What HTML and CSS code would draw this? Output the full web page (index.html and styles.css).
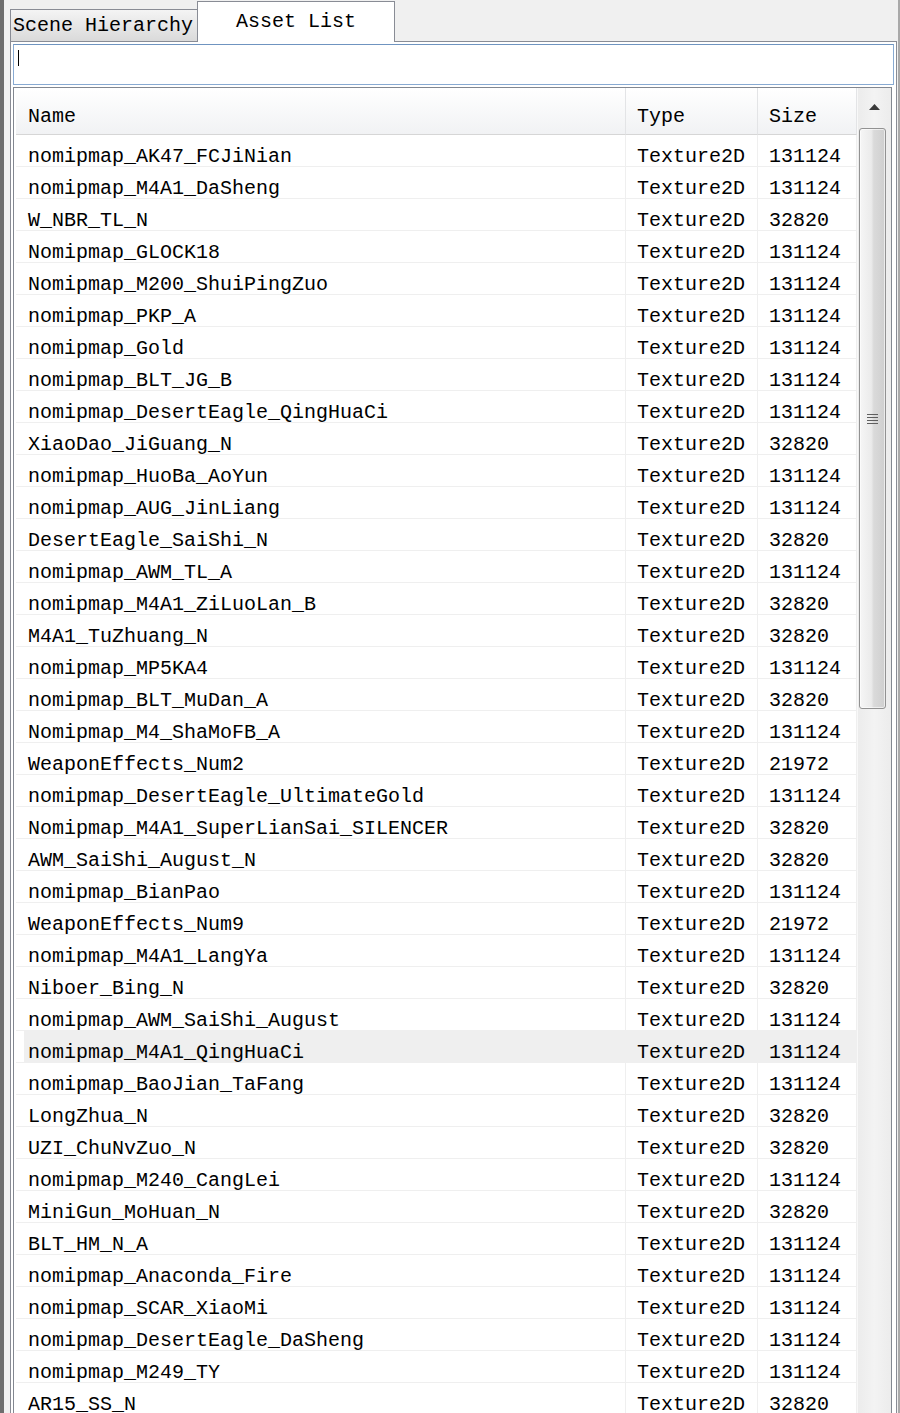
FILE: index.html
```
<!DOCTYPE html>
<html>
  <head>
    <meta charset="utf-8" />
    <title>Asset List</title>
    <meta name="viewport" content="width=device-width, initial-scale=1" />
    <link rel="stylesheet" href="styles.css">
  </head>

  <body>
    <div class="window">
      <div class="tabs">
        <div class="tab tab-off">Scene Hierarchy</div>
        <div class="tab tab-on">Asset List</div>
      </div>

      <div class="page">
        <div class="search"><span class="caret"></span></div>

        <div class="list">
          <div class="grid">
            <div class="row head">
              <div class="cell name">Name</div>
              <div class="cell">Type</div>
              <div class="cell">Size</div>
            </div>
            <div class="row"><div class="cell name">nomipmap_AK47_FCJiNian</div><div class="cell">Texture2D</div><div class="cell">131124</div></div>
            <div class="row"><div class="cell name">nomipmap_M4A1_DaSheng</div><div class="cell">Texture2D</div><div class="cell">131124</div></div>
            <div class="row"><div class="cell name">W_NBR_TL_N</div><div class="cell">Texture2D</div><div class="cell">32820</div></div>
            <div class="row"><div class="cell name">Nomipmap_GLOCK18</div><div class="cell">Texture2D</div><div class="cell">131124</div></div>
            <div class="row"><div class="cell name">Nomipmap_M200_ShuiPingZuo</div><div class="cell">Texture2D</div><div class="cell">131124</div></div>
            <div class="row"><div class="cell name">nomipmap_PKP_A</div><div class="cell">Texture2D</div><div class="cell">131124</div></div>
            <div class="row"><div class="cell name">nomipmap_Gold</div><div class="cell">Texture2D</div><div class="cell">131124</div></div>
            <div class="row"><div class="cell name">nomipmap_BLT_JG_B</div><div class="cell">Texture2D</div><div class="cell">131124</div></div>
            <div class="row"><div class="cell name">nomipmap_DesertEagle_QingHuaCi</div><div class="cell">Texture2D</div><div class="cell">131124</div></div>
            <div class="row"><div class="cell name">XiaoDao_JiGuang_N</div><div class="cell">Texture2D</div><div class="cell">32820</div></div>
            <div class="row"><div class="cell name">nomipmap_HuoBa_AoYun</div><div class="cell">Texture2D</div><div class="cell">131124</div></div>
            <div class="row"><div class="cell name">nomipmap_AUG_JinLiang</div><div class="cell">Texture2D</div><div class="cell">131124</div></div>
            <div class="row"><div class="cell name">DesertEagle_SaiShi_N</div><div class="cell">Texture2D</div><div class="cell">32820</div></div>
            <div class="row"><div class="cell name">nomipmap_AWM_TL_A</div><div class="cell">Texture2D</div><div class="cell">131124</div></div>
            <div class="row"><div class="cell name">nomipmap_M4A1_ZiLuoLan_B</div><div class="cell">Texture2D</div><div class="cell">32820</div></div>
            <div class="row"><div class="cell name">M4A1_TuZhuang_N</div><div class="cell">Texture2D</div><div class="cell">32820</div></div>
            <div class="row"><div class="cell name">nomipmap_MP5KA4</div><div class="cell">Texture2D</div><div class="cell">131124</div></div>
            <div class="row"><div class="cell name">nomipmap_BLT_MuDan_A</div><div class="cell">Texture2D</div><div class="cell">32820</div></div>
            <div class="row"><div class="cell name">Nomipmap_M4_ShaMoFB_A</div><div class="cell">Texture2D</div><div class="cell">131124</div></div>
            <div class="row"><div class="cell name">WeaponEffects_Num2</div><div class="cell">Texture2D</div><div class="cell">21972</div></div>
            <div class="row"><div class="cell name">nomipmap_DesertEagle_UltimateGold</div><div class="cell">Texture2D</div><div class="cell">131124</div></div>
            <div class="row"><div class="cell name">Nomipmap_M4A1_SuperLianSai_SILENCER</div><div class="cell">Texture2D</div><div class="cell">32820</div></div>
            <div class="row"><div class="cell name">AWM_SaiShi_August_N</div><div class="cell">Texture2D</div><div class="cell">32820</div></div>
            <div class="row"><div class="cell name">nomipmap_BianPao</div><div class="cell">Texture2D</div><div class="cell">131124</div></div>
            <div class="row"><div class="cell name">WeaponEffects_Num9</div><div class="cell">Texture2D</div><div class="cell">21972</div></div>
            <div class="row"><div class="cell name">nomipmap_M4A1_LangYa</div><div class="cell">Texture2D</div><div class="cell">131124</div></div>
            <div class="row"><div class="cell name">Niboer_Bing_N</div><div class="cell">Texture2D</div><div class="cell">32820</div></div>
            <div class="row"><div class="cell name">nomipmap_AWM_SaiShi_August</div><div class="cell">Texture2D</div><div class="cell">131124</div></div>
            <div class="row hot"><div class="cell name">nomipmap_M4A1_QingHuaCi</div><div class="cell">Texture2D</div><div class="cell">131124</div></div>
            <div class="row"><div class="cell name">nomipmap_BaoJian_TaFang</div><div class="cell">Texture2D</div><div class="cell">131124</div></div>
            <div class="row"><div class="cell name">LongZhua_N</div><div class="cell">Texture2D</div><div class="cell">32820</div></div>
            <div class="row"><div class="cell name">UZI_ChuNvZuo_N</div><div class="cell">Texture2D</div><div class="cell">32820</div></div>
            <div class="row"><div class="cell name">nomipmap_M240_CangLei</div><div class="cell">Texture2D</div><div class="cell">131124</div></div>
            <div class="row"><div class="cell name">MiniGun_MoHuan_N</div><div class="cell">Texture2D</div><div class="cell">32820</div></div>
            <div class="row"><div class="cell name">BLT_HM_N_A</div><div class="cell">Texture2D</div><div class="cell">131124</div></div>
            <div class="row"><div class="cell name">nomipmap_Anaconda_Fire</div><div class="cell">Texture2D</div><div class="cell">131124</div></div>
            <div class="row"><div class="cell name">nomipmap_SCAR_XiaoMi</div><div class="cell">Texture2D</div><div class="cell">131124</div></div>
            <div class="row"><div class="cell name">nomipmap_DesertEagle_DaSheng</div><div class="cell">Texture2D</div><div class="cell">131124</div></div>
            <div class="row"><div class="cell name">nomipmap_M249_TY</div><div class="cell">Texture2D</div><div class="cell">131124</div></div>
            <div class="row"><div class="cell name">AR15_SS_N</div><div class="cell">Texture2D</div><div class="cell">32820</div></div>
          </div>

          <div class="vscroll">
            <div class="arrow-up">
              <svg width="11" height="6" viewBox="0 0 11 6"><polygon points="0,6 5.5,0 11,6" fill="#3a3a3a"/></svg>
            </div>
            <div class="thumb">
              <svg width="11" height="10" viewBox="0 0 11 10">
                <rect x="0" y="0" width="11" height="1" fill="#5f5f5f"/>
                <rect x="0" y="3" width="11" height="1" fill="#5f5f5f"/>
                <rect x="0" y="6" width="11" height="1" fill="#5f5f5f"/>
                <rect x="0" y="9" width="11" height="1" fill="#5f5f5f"/>
              </svg>
            </div>
          </div>
        </div>
      </div>
    </div>
  </body>
</html>
```

FILE: styles.css
```
* {
    font-family: "Liberation Mono", "DejaVu Sans Mono", monospace;
    font-size: 20px;
    color: #000;
    box-sizing: border-box;
}

body {
    margin: 0;
    height: 1413px;
    overflow: hidden;
    background-color: #f0f0f0;
}

.window {
    height: 1413px;
    padding: 0 1px 0 6px;
    border-left: 4px solid #6d6d6d;
    border-right: 2px solid #a9a9a9;
}

/* tab strip */
.tabs {
    display: flex;
    align-items: flex-end;
    height: 41px;
}

.tab {
    border: 1px solid #898c95;
    border-bottom: none;
    white-space: nowrap;
}

.tab-off {
    width: 187px;
    height: 32px;
    padding-left: 2px;
    line-height: 32px;
    border-right: none;
    background: linear-gradient(#f4f4f4, #dadada);
}

.tab-on {
    position: relative;
    z-index: 1;
    width: 198px;
    height: 41px;
    margin-bottom: -1px;
    padding-top: 4px;
    line-height: 32px;
    text-align: center;
    background-color: #fff;
}

.page {
    padding: 2px 2px 0;
    border: 1px solid #898c95;
    background-color: #fff;
}

.search {
    height: 41px;
    margin-bottom: 2px;
    padding: 5px 0 0 4px;
    border: 1px solid #88aad2;
    border-top-color: #6f94c0;
}

.caret {
    display: block;
    width: 1px;
    height: 16px;
    background-color: #000;
}

/* list */
.list {
    display: flex;
    margin-right: 2px;
    padding-left: 2px;
    border: 1px solid #828790;
}

.grid {
    width: 841px;
}

.row {
    display: grid;
    grid-template-columns: 610px 132px 99px;
}

.cell {
    height: 32px;
    padding: 13px 0 0 11px;
    line-height: 18px;
    white-space: nowrap;
    overflow: hidden;
    border-right: 1px solid #efefef;
    border-bottom: 1px solid #efefef;
}

.cell.name {
    padding-left: 12px;
}

.head .cell {
    height: 47px;
    padding-top: 18px;
    line-height: 22px;
    background: linear-gradient(#ffffff, #f1f2f4);
    border-right-color: #e3e4e6;
    border-bottom-color: #d6d6d6;
}

.hot .cell {
    background-color: #efefef;
}

.hot .cell.name {
    background: linear-gradient(to right, #fff 8px, #efefef 8px);
}

/* scrollbar */
.vscroll {
    width: 34px;
    border-left: 1px solid #f8f8f8;
    background: linear-gradient(to right, #ececec, #f3f3f3 50%, #ececec);
}

.arrow-up {
    display: flex;
    align-items: center;
    justify-content: center;
    height: 38px;
}

.thumb {
    display: flex;
    align-items: center;
    justify-content: center;
    width: 27px;
    height: 581px;
    margin: 2px 0 0 1px;
    border: 1px solid #929292;
    border-radius: 3px;
    background: linear-gradient(to right, #f6f6f6, #ebebeb 45%, #dadada 55%, #cfcfcf);
    box-shadow: inset 0 0 0 1px rgba(255, 255, 255, 0.6);
}
```
